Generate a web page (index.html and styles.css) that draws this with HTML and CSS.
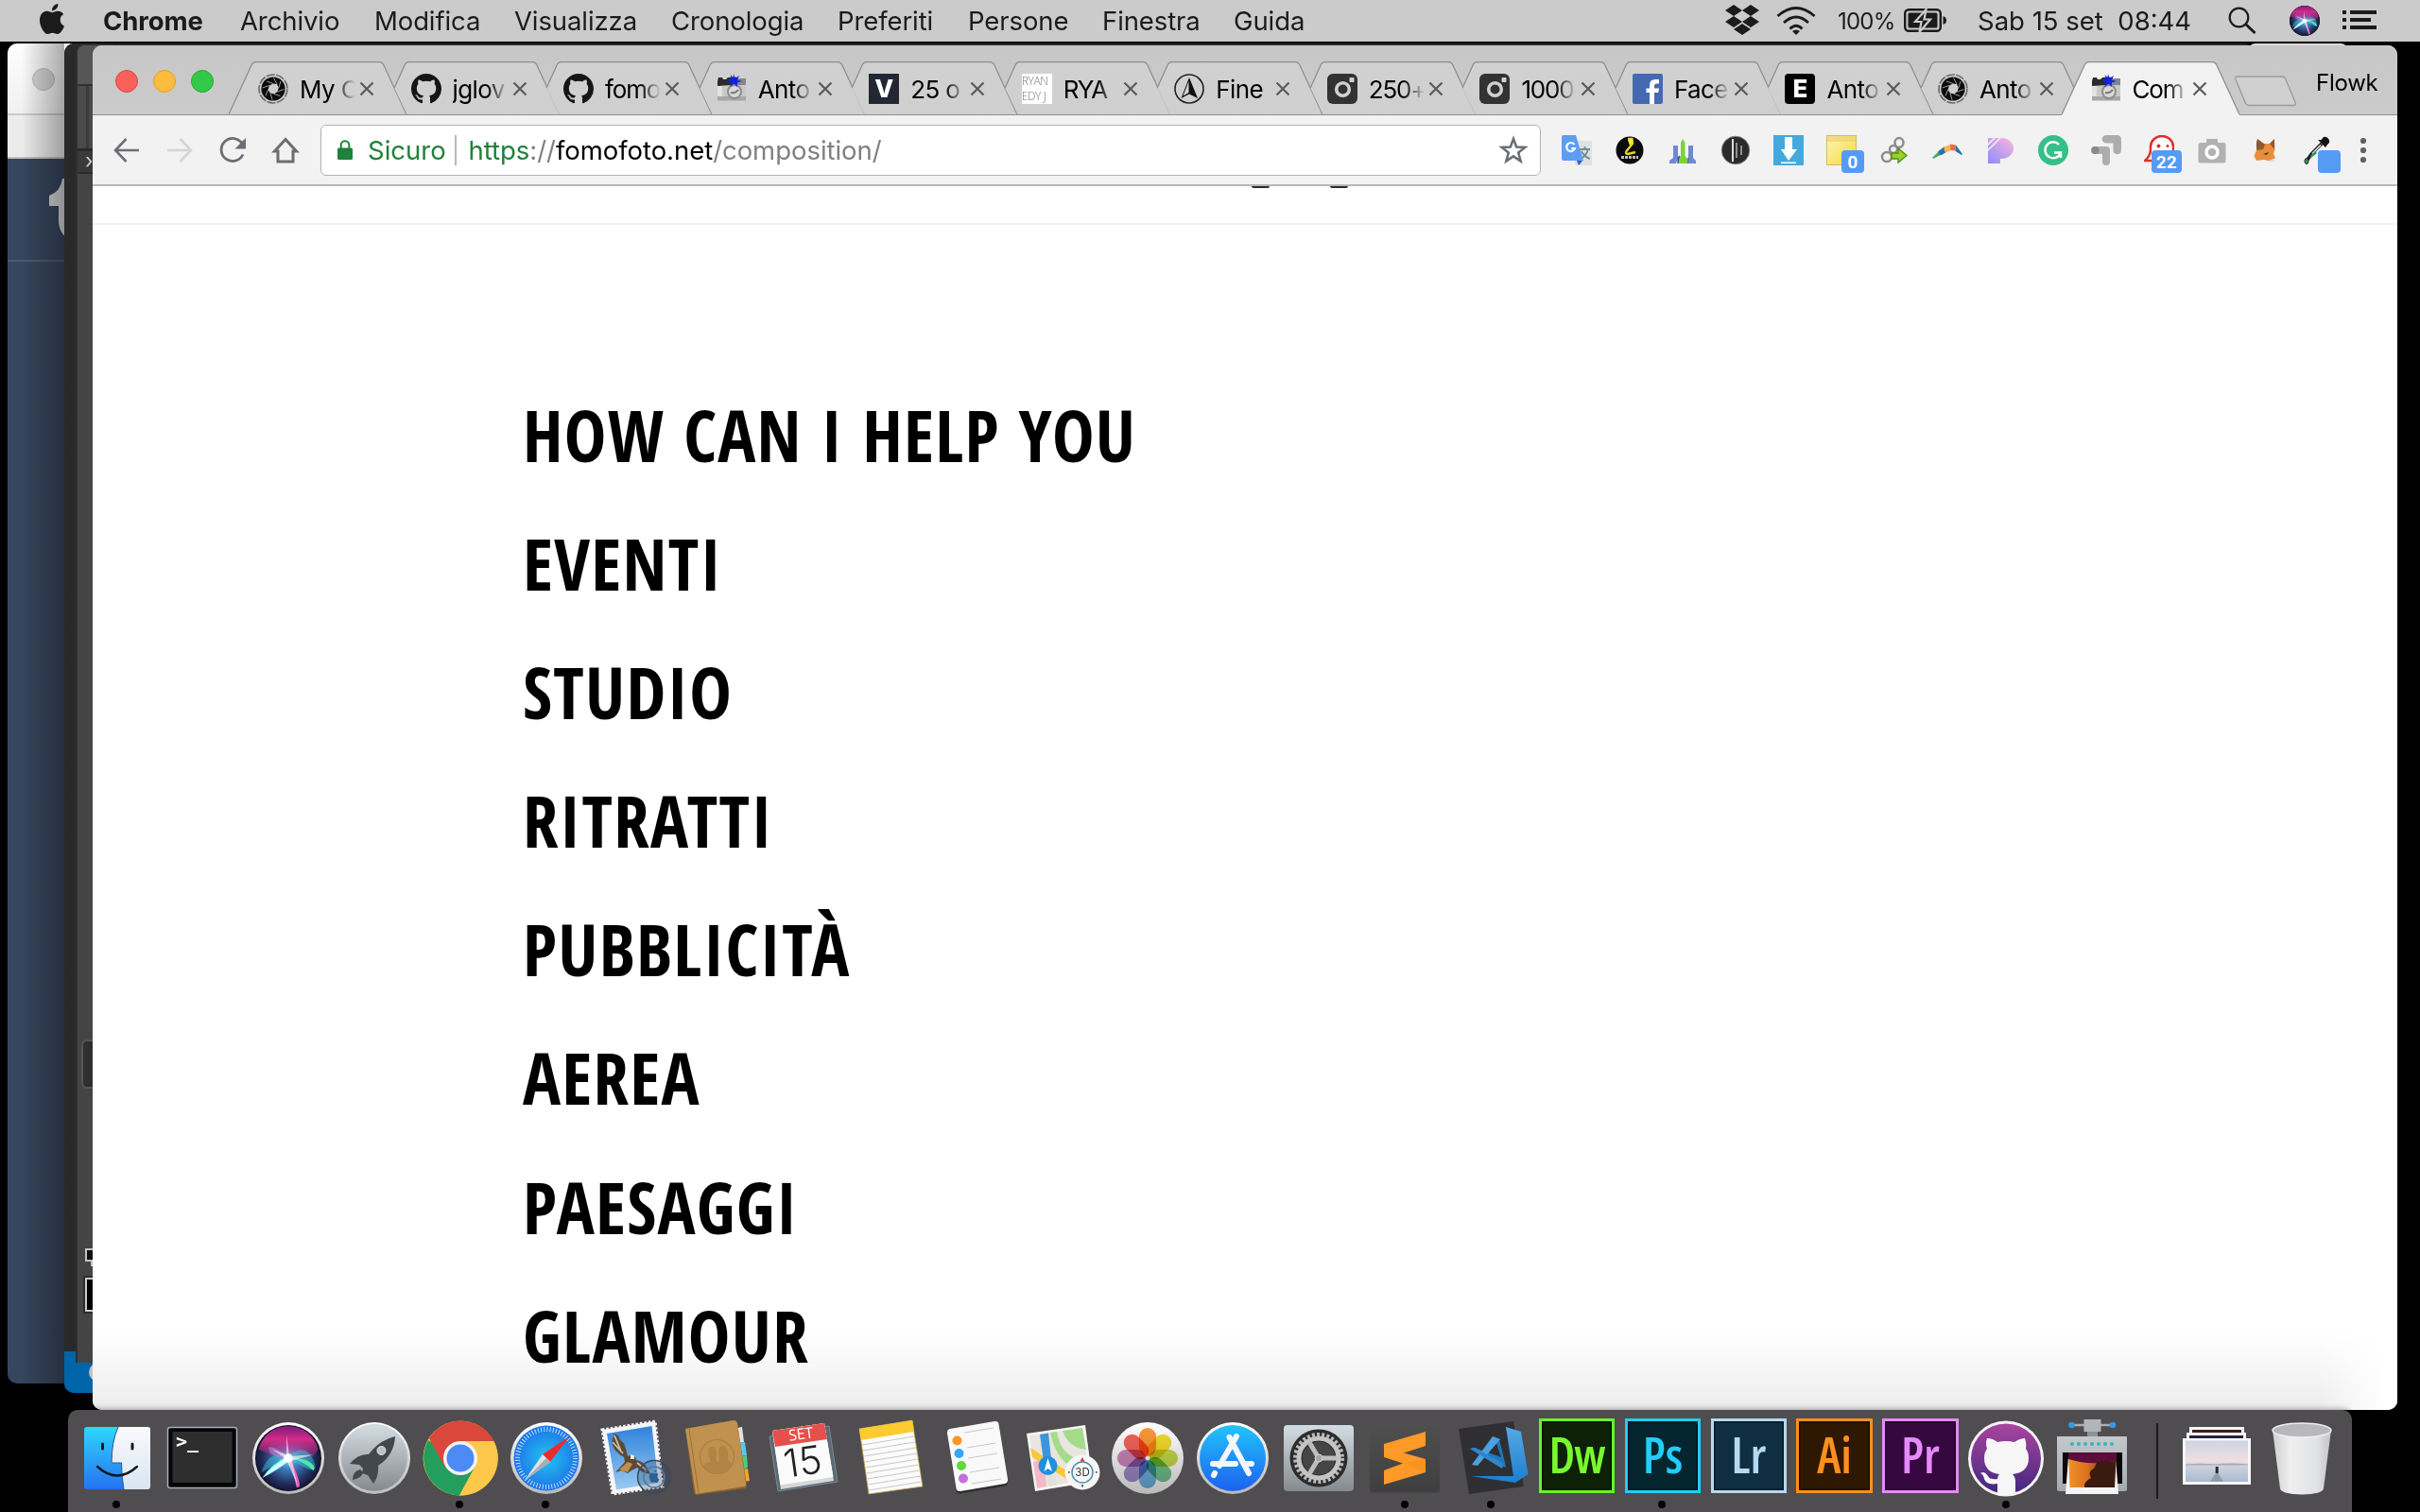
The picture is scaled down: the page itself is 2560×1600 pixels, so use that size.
FILE: index.html
```html
<!DOCTYPE html>
<html lang="it">
<head>
<meta charset="utf-8">
<title>Desktop</title>
<link rel="stylesheet" href="styles.css">
</head>
<body>
<svg class="defs" width="0" height="0" aria-hidden="true">
  <defs>
    <linearGradient id="gChrome" x1="0" y1="0" x2="0" y2="1"><stop offset="0" stop-color="#d1d1d1"/><stop offset="1" stop-color="#cfcfcf"/></linearGradient>
    <linearGradient id="gFinder" x1="0" y1="0" x2="0" y2="1"><stop offset="0" stop-color="#2fd6fb"/><stop offset="1" stop-color="#2672f3"/></linearGradient>
    <linearGradient id="gFace" x1="0" y1="0" x2="0" y2="1"><stop offset="0" stop-color="#f9f9fb"/><stop offset="1" stop-color="#d9e6f3"/></linearGradient>
    <linearGradient id="gSilver" x1="0" y1="0" x2="0" y2="1"><stop offset="0" stop-color="#d3dde3"/><stop offset="1" stop-color="#858a8d"/></linearGradient>
    <linearGradient id="gRim" x1="0" y1="0" x2="0" y2="1"><stop offset="0" stop-color="#ffffff"/><stop offset="1" stop-color="#b9b9b9"/></linearGradient>
    <radialGradient id="gSafari"><stop offset="0" stop-color="#25c3ee"/><stop offset="1" stop-color="#1c74e8"/></radialGradient>
    <linearGradient id="gStore" x1="0" y1="0" x2="0" y2="1"><stop offset="0" stop-color="#22c3fb"/><stop offset="1" stop-color="#1c62ee"/></linearGradient>
    <radialGradient id="gSiri" cx=".5" cy=".5" r=".55"><stop offset="0" stop-color="#7ff0f0"/><stop offset=".3" stop-color="#3f7fc0"/><stop offset=".7" stop-color="#23305f"/><stop offset="1" stop-color="#0c0d22"/></radialGradient>
    <linearGradient id="gSiriTop" x1="0" y1="0" x2="0" y2="1"><stop offset="0" stop-color="#7a1c7c"/><stop offset=".35" stop-color="#d42a88"/><stop offset="1" stop-color="#d42a88" stop-opacity="0"/></linearGradient>
    <linearGradient id="gSky" x1="0" y1="0" x2="0" y2="1"><stop offset="0" stop-color="#2f82dd"/><stop offset="1" stop-color="#9bcaf0"/></linearGradient>
    <linearGradient id="gGit" x1="0" y1="0" x2="0" y2="1"><stop offset="0" stop-color="#a9459f"/><stop offset="1" stop-color="#43277f"/></linearGradient>
    <linearGradient id="gTrash" x1="0" y1="0" x2="1" y2="0"><stop offset="0" stop-color="#cfcfd1"/><stop offset=".3" stop-color="#efeff0"/><stop offset=".75" stop-color="#e2e3e5"/><stop offset="1" stop-color="#c4c4c6"/></linearGradient>
    <linearGradient id="gLake" x1="0" y1="0" x2="0" y2="1"><stop offset="0" stop-color="#cfd3e3"/><stop offset=".5" stop-color="#efdfe0"/><stop offset=".6" stop-color="#cfd3de"/><stop offset="1" stop-color="#a9bccf"/></linearGradient>
    <linearGradient id="gFire" x1="0" y1="0" x2="1" y2="0"><stop offset="0" stop-color="#f0932c"/><stop offset=".4" stop-color="#d9701c"/><stop offset="1" stop-color="#3a1a14"/></linearGradient>
    <linearGradient id="gDark" x1="0" y1="0" x2="0" y2="1"><stop offset="0" stop-color="#504f4f"/><stop offset="1" stop-color="#3f3f3f"/></linearGradient>
    <linearGradient id="gVs" x1="0" y1="0" x2="0" y2="1"><stop offset="0" stop-color="#56a9e4"/><stop offset="1" stop-color="#1c7fd0"/></linearGradient>
    <linearGradient id="gPico" x1=".8" y1="0" x2="0" y2="1"><stop offset="0" stop-color="#f3b2e0"/><stop offset="1" stop-color="#8c8cfb"/></linearGradient>
    <linearGradient id="gPress" x1="0" y1="0" x2="0" y2="1"><stop offset="0" stop-color="#c3c8cc"/><stop offset="1" stop-color="#a4a9ad"/></linearGradient>
    <linearGradient id="gNote" x1="0" y1="0" x2="1" y2="1"><stop offset="0" stop-color="#fdf6b4"/><stop offset="1" stop-color="#f6d93f"/></linearGradient>
  </defs>
  <symbol id="tab-first" viewBox="0 0 188 57"><path d="M0 56 L24.5 3 Q26 .5 29 .5 H159 Q162 .5 163.5 3 L188 56Z" fill="url(#gChrome)"/><path d="M0 56 L24.5 3 Q26 .5 29 .5 H159 Q162 .5 163.5 3 L188 56" fill="none" stroke="#8e8e8e" stroke-width="1.3"/></symbol>
  <symbol id="tab-mid" viewBox="0 0 188 57"><path d="M13.2 28 L24.5 3 Q26 .5 29 .5 H159 Q162 .5 163.5 3 L188 56 H26.5Z" fill="url(#gChrome)"/><path d="M13.2 28 L24.5 3 Q26 .5 29 .5 H159 Q162 .5 163.5 3 L188 56" fill="none" stroke="#8e8e8e" stroke-width="1.3"/></symbol>
  <symbol id="tab-active" viewBox="0 0 188 57"><path d="M0 57 V56 L24.5 3 Q26 .5 29 .5 H159 Q162 .5 163.5 3 L188 56 V57Z" fill="#f2f2f2"/><path d="M0 56 L24.5 3 Q26 .5 29 .5 H159 Q162 .5 163.5 3 L188 56" fill="none" stroke="#8e8e8e" stroke-width="1.3"/></symbol>
  <symbol id="close" viewBox="0 0 16 16"><path d="M1.5 1.5 L14.5 14.5 M14.5 1.5 L1.5 14.5" stroke="#5a5a5a" stroke-width="2.2" fill="none"/></symbol>
  <symbol id="aperture" viewBox="0 0 32 32"><circle cx="16" cy="16" r="15" fill="none" stroke="#6a6a6a" stroke-width="1.6" stroke-dasharray="9 1.5"/><circle cx="16" cy="16" r="12.6" fill="#0c0c0c"/><path d="M16 10.5 L20 11 L21.8 15 L20.5 19 L17 21.5 L13 20.5 L10.5 17 L12 12.5Z" fill="#cfcfcf"/><g stroke="#a8a8a8" stroke-width=".9"><path d="M16 10.5 L9 8 M20 11 L16.500 4.500 M21.8 15 L24 8 M20.500 19 L27.500 16.500 M17 21.500 L23.500 23.500 M13 20.500 L15 27.500 M10.500 17 L8 23.500 M12 12.500 L4.500 15"/></g></symbol>
  <symbol id="octocat" viewBox="0 0 16 16"><path d="M8 0C3.58 0 0 3.58 0 8c0 3.54 2.29 6.53 5.47 7.59.4.07.55-.17.55-.38 0-.19-.01-.82-.01-1.49-2.01.37-2.53-.49-2.69-.94-.09-.23-.48-.94-.82-1.13-.28-.15-.68-.52-.01-.53.63-.01 1.08.58 1.23.82.72 1.21 1.87.87 2.33.66.07-.52.28-.87.51-1.07-1.78-.2-3.64-.89-3.64-3.95 0-.87.31-1.59.82-2.15-.08-.2-.36-1.02.08-2.12 0 0 .67-.21 2.2.82.64-.18 1.32-.27 2-.27.68 0 1.36.09 2 .27 1.53-1.04 2.2-.82 2.2-.82.44 1.1.16 1.92.08 2.12.51.56.82 1.27.82 2.15 0 3.07-1.87 3.75-3.65 3.95.29.25.54.73.54 1.48 0 1.07-.01 1.93-.01 2.2 0 .21.15.46.55.38A8.013 8.013 0 0016 8c0-4.42-3.58-8-8-8z" fill="#161414"/></symbol>
  <symbol id="camera" viewBox="0 0 32 32"><rect x="1" y="8" width="30" height="20" fill="#c9c9c9"/><path d="M1 8 L2 4 L6 4 L7 6 H10 L12 4 L20 3.5 L23 5 H31 V11 L1 13Z" fill="#2b2b2b"/><path d="M22 5 H31 V12 H22Z" fill="#84868c"/><path d="M1 13 H6 V24 H1Z" fill="#e2e2e2"/><path d="M1 24 H31 V28.5 H1Z" fill="#a7a7a7"/><circle cx="19" cy="19" r="8" fill="#8d8d8d"/><circle cx="19" cy="19" r="6" fill="#d9d9d9"/><path d="M15 20 Q20 21 23 17" stroke="#777" stroke-width="2" fill="none"/><path d="M18 0 L19.500 5 L24 2 L22 6.500 L27 8 L21.500 9.500 L22 14 L18.500 10.500 L14.500 14 L15.500 9 L11 7 L16 5.500 L14.500 1 L17.500 4Z" fill="#1423e0"/></symbol>
  <symbol id="insta" viewBox="0 0 32 32"><rect width="32" height="32" rx="6" fill="#323232"/><circle cx="16.5" cy="16.5" r="6.8" fill="none" stroke="#d0d0d0" stroke-width="3.6"/><rect x="23.5" y="4" width="5" height="5" rx="1" fill="#d0d0d0"/></symbol>
  <symbol id="siri" viewBox="0 0 80 80">
    <circle cx="40" cy="40" r="36" fill="url(#gSiri)"/>
    <path d="M7 30 A34 34 0 0 1 73 30 Q64 50 40 44 Q22 38 7 30Z" fill="url(#gSiriTop)"/>
    <path d="M10 56 Q18 30 40 38 Q58 22 68 42 Q74 56 62 52 Q50 46 42 42 Q26 46 10 56Z" fill="#35cfe0" opacity=".45"/>
    <path d="M40 40 Q26 26 18 28 Q18 40 40 40Z" fill="#b58be0" opacity=".55"/>
    <path d="M39 38 Q46 56 49 72 Q54 74 52 66 Q46 46 41 38Z" fill="#ee62b8"/>
    <path d="M40 38 Q60 46 68 54 Q72 48 60 42Z" fill="#4ee6a8"/>
    <path d="M40 38 Q22 46 11 62 Q30 52 42 42Z" fill="#a6fbfb"/>
    <path d="M38 14 L41 38 L68 36 L44 43 L50 70 L39 44 L13 60 L36 40 L22 30 L38 36Z" fill="#fff" opacity=".6"/>
    <circle cx="40" cy="40" r="5" fill="#fff"/>
  </symbol>
</svg>

<div class="window tumblr">
  <div class="tumblr-title"><span class="ghost-light"></span></div>
  <div class="tumblr-tools"></div>
  <div class="tumblr-page"><svg class="tumblr-t" width="24" height="66" viewBox="0 0 24 66"><path d="M14 0 H24 V66 Q11 60 10 46 V29 H0 V18 Q12 14 14 0Z" fill="#d4d5d8"/></svg></div>
</div>
<div class="window editor"><div class="editor-body"></div><div class="editor-status"><span class="status-dot"></span></div></div>
<div class="window photoshop">
  <div class="ps-head"></div>
  <div class="ps-options"></div>
  <div class="ps-tabs">›</div>
  <div class="ps-tools">
    <span class="ps-tool"></span>
    <svg class="ps-swatches" width="16" height="72" viewBox="0 0 16 72"><path d="M16 2 H9 V14 H16 M15 14 V20" fill="#111" stroke="#c4c4c4" stroke-width="2"/><rect x="7" y="31" width="12" height="38" fill="none" stroke="#2c2c2c" stroke-width="2"/><rect x="9" y="33" width="12" height="34" fill="#000" stroke="#c9c9c9" stroke-width="2"/></svg>
  </div>
</div>
<div class="peek"></div>

<main class="window chrome">
  <div class="tabstrip">
    <div class="lights"><i class="red"></i><i class="yellow"></i><i class="green"></i></div>
    <div class="tabs">
      <div class="tab"><svg class="shape"><use href="#tab-first"/></svg><svg class="fav"><use href="#aperture"/></svg><span class="title">My C</span><svg class="x"><use href="#close"/></svg></div>
      <div class="tab"><svg class="shape"><use href="#tab-mid"/></svg><svg class="fav"><use href="#octocat"/></svg><span class="title">jglov</span><svg class="x"><use href="#close"/></svg></div>
      <div class="tab"><svg class="shape"><use href="#tab-mid"/></svg><svg class="fav"><use href="#octocat"/></svg><span class="title tight">fomo</span><svg class="x"><use href="#close"/></svg></div>
      <div class="tab"><svg class="shape"><use href="#tab-mid"/></svg><svg class="fav"><use href="#camera"/></svg><span class="title">Anto</span><svg class="x"><use href="#close"/></svg></div>
      <div class="tab"><svg class="shape"><use href="#tab-mid"/></svg><span class="fav letter navy">V</span><span class="title">25 o</span><svg class="x"><use href="#close"/></svg></div>
      <div class="tab"><svg class="shape"><use href="#tab-mid"/></svg><span class="fav ryan">RYAN<br>EDY J</span><span class="title tight">RYA</span><svg class="x"><use href="#close"/></svg></div>
      <div class="tab"><svg class="shape"><use href="#tab-mid"/></svg><svg class="fav" viewBox="0 0 32 32"><circle cx="16" cy="16" r="15" fill="none" stroke="#222" stroke-width="1.6"/><path d="M16 4 L25 26 L16 21.5 L7.5 26Z" fill="#111"/><path d="M15.5 8 V20 L9.5 23.5Z" fill="#d4d4d4"/></svg><span class="title plain">Fine</span><svg class="x"><use href="#close"/></svg></div>
      <div class="tab"><svg class="shape"><use href="#tab-mid"/></svg><svg class="fav"><use href="#insta"/></svg><span class="title tight">250+</span><svg class="x"><use href="#close"/></svg></div>
      <div class="tab"><svg class="shape"><use href="#tab-mid"/></svg><svg class="fav"><use href="#insta"/></svg><span class="title tight">1000</span><svg class="x"><use href="#close"/></svg></div>
      <div class="tab"><svg class="shape"><use href="#tab-mid"/></svg><svg class="fav" viewBox="0 0 32 32"><rect width="32" height="32" rx="2" fill="#4568b2"/><path d="M18 32 V20 H14.5 V15.5 H18 V12 Q18 6 24 6 H28 V10.5 H25.5 Q23 10.5 23 13 V15.5 H28 L27.3 20 H23 V32Z" fill="#fff"/></svg><span class="title">Face</span><svg class="x"><use href="#close"/></svg></div>
      <div class="tab"><svg class="shape"><use href="#tab-mid"/></svg><span class="fav letter black">E</span><span class="title">Anto</span><svg class="x"><use href="#close"/></svg></div>
      <div class="tab"><svg class="shape"><use href="#tab-mid"/></svg><svg class="fav"><use href="#aperture"/></svg><span class="title">Anto</span><svg class="x"><use href="#close"/></svg></div>
      <div class="tab active"><svg class="shape"><use href="#tab-active"/></svg><svg class="fav"><use href="#camera"/></svg><span class="title tight">Com</span><svg class="x"><use href="#close"/></svg></div>
    </div>
    <svg class="newtab" width="68" height="34" viewBox="0 0 68 34"><path d="M4 1 H51 Q53.5 1 54.5 3 L65 28 Q66.5 31.5 63 31.5 H16 Q13.5 31.5 12.5 29.5 L2 4 Q1 1 4 1Z" fill="#d0d0d0" stroke="#9a9a9a" stroke-width="1.3"/></svg>
    <span class="profile">Flowk</span>
  </div>

  <div class="toolbar">
    <svg class="nav" viewBox="0 0 32 32"><path d="M29 16 H4 M15.5 4 L4 16 L15.5 28" fill="none" stroke="#6b6e73" stroke-width="2.6"/></svg>
    <svg class="nav" viewBox="0 0 32 32"><path d="M3 16 H28 M16.5 4 L28 16 L16.5 28" fill="none" stroke="#d3d4d6" stroke-width="2.6"/></svg>
    <svg class="nav" viewBox="0 0 32 32"><path d="M26.5 9.5 A12 12 0 1 0 27 20.5" fill="none" stroke="#6b6e73" stroke-width="2.8"/><path d="M30 3 V14.5 H18.5Z" fill="#6b6e73"/></svg>
    <svg class="nav" viewBox="0 0 32 32"><path d="M16 4.5 L4.5 17 H8 V28 H24 V17 H27.5Z" fill="none" stroke="#6b6e73" stroke-width="3"/></svg>
    <div class="omnibox">
      <svg class="lock" width="16" height="22" viewBox="0 0 16 22"><rect y="8.5" width="16" height="12.5" rx="1.5" fill="#20813a"/><path d="M3.7 9 V5.5 A4.3 4.3 0 0 1 12.3 5.5 V9" fill="none" stroke="#20813a" stroke-width="2"/></svg>
      <span class="secure">Sicuro</span><span class="sep"></span>
      <span class="url"><span class="scheme">https</span><span class="dim">://</span><span class="host">fomofoto.net</span><span class="dim">/composition/</span></span>
      <svg class="star" width="32" height="32" viewBox="0 0 32 32"><path d="M16 4 L19.2 12.6 L28.3 12.9 L21.2 18.6 L23.6 27.5 L16 22.4 L8.4 27.5 L10.8 18.6 L3.7 12.9 L12.8 12.6Z" fill="none" stroke="#6b6e73" stroke-width="2.6"/></svg>
    </div>
    <div class="extensions">
      <div class="ext"><svg viewBox="0 0 32 32"><rect x="14" y="6" width="18" height="26" rx="1" fill="#e1e1e1"/><path d="M19 15 H30 M24.5 12 V15 M28 15 Q26 22 20 25 M21 17 Q24 23 30 25" stroke="#6f8b92" stroke-width="1.8" fill="none"/><path d="M16 27 L23 26 L18 32Z" fill="#3a5bc4"/><path d="M2 0 H15 L23 27 H2 Q0 27 0 25 V2 Q0 0 2 0Z" fill="#5c9ef3"/><path d="M13.5 10 A4.5 4.5 0 1 0 14 14 H10" fill="none" stroke="#fff" stroke-width="2.2"/></svg></div>
      <div class="ext"><svg viewBox="0 0 32 32"><circle cx="16" cy="16" r="14.500" fill="#0a0a0a"/><path d="M14 4 H18.500 L19 9 L12.500 17 Q11 20 14 20 L22 18" fill="none" stroke="#e0d620" stroke-width="2.4"/><path d="M14 5 L18 4 L19 8 L16 11Z" fill="#f4ec3a"/><path d="M7 23.500 H25" stroke="#bbb" stroke-width="3" stroke-dasharray="3 1"/></svg></div>
      <div class="ext"><svg viewBox="0 0 32 32"><path d="M6 11 H11 V24 L9 30 H2 V27 L6 24Z M22 11 H27 V24 L30 27 V30 H23 L22 24Z" fill="#6f8ad2"/><path d="M16.200 4 L18.500 8 V22 L22 26 V30 H11 V26 L14 22 V8Z" fill="#7fd13a"/><path d="M11 30 V24 L13 22 M22 30 V24" stroke="#4b62b8" stroke-width="1.5"/></svg></div>
      <div class="ext"><svg viewBox="0 0 32 32"><circle cx="16" cy="16" r="14.8" fill="#2b2b2b" stroke="#888" stroke-width="1"/><path d="M13 4 V28" stroke="#ddd" stroke-width="2"/><path d="M17 8 V24 M22 11 V21" stroke="#aaa" stroke-width="1.6"/></svg></div>
      <div class="ext"><svg viewBox="0 0 32 32"><rect width="32" height="32" fill="#44aade"/><path d="M12 2 H20 V15 H25 L16 27 L8 15 H12Z M8 28.5 H24 V30 H8Z" fill="#fff"/></svg></div>
      <div class="ext"><svg viewBox="0 0 32 32"><rect x=".5" y=".5" width="31" height="31" fill="url(#gNote)" stroke="#d8b95c"/><rect x="1" y="1" width="30" height="6" fill="#e9cf6a" opacity=".6"/></svg><b class="badge">0</b></div>
      <div class="ext"><svg viewBox="0 0 32 32"><g fill="none" stroke="#8d8d8d" stroke-width="2.5"><ellipse cx="21" cy="8" rx="4.500" ry="5"/><circle cx="15" cy="15" r="4"/><circle cx="8" cy="23" r="5"/></g><path d="M13 19 H20 V14 L29 21.5 L20 29 V25 H13Z" fill="#9ad227" stroke="#4f8f12" stroke-width="1.3"/></svg></div>
      <div class="ext"><svg viewBox="0 0 32 32"><path d="M0 24 L8 16 L9.500 20.500 L1 25Z" fill="#4aa36a"/><path d="M6 17.500 L13 12 L14 18.500 L9 21.500Z" fill="#2277a8"/><path d="M12 13 L19.500 9.500 L20 16 L14 18.500Z" fill="#f4b74f"/><path d="M19 9.5 L25 10.5 L24.500 16.500 L19.500 16Z" fill="#ee6a4d"/><path d="M25 10.5 L32 20 L31 21 L24.500 17Z" fill="#1c7ba8"/></svg></div>
      <div class="ext"><svg viewBox="0 0 32 32"><path d="M3 3 H17 A13 11 0 0 1 17 25 H16 V30 H3Z" fill="url(#gPico)"/><path d="M2 11 L12 1 M2 17 L18 1" stroke="#f2f2f2" stroke-width="1.5"/></svg></div>
      <div class="ext"><svg viewBox="0 0 32 32"><circle cx="16" cy="16" r="16" fill="#34c087"/><path d="M22 9.8 A8.5 8.5 0 1 0 24 18.5 H17 M24 18 V24" fill="none" stroke="#fff" stroke-width="2.4"/></svg></div>
      <div class="ext"><svg viewBox="0 0 32 32"><path d="M16 4.300 H27.700 V16" fill="none" stroke="#adadad" stroke-width="8.500" stroke-linejoin="round" stroke-linecap="round"/><path d="M4 16 H16 V28" fill="none" stroke="#adadad" stroke-width="8" stroke-linejoin="round" stroke-linecap="round"/><circle cx="4.500" cy="16" r="4" fill="#8a8a8a"/></svg></div>
      <div class="ext"><svg viewBox="0 0 32 32"><path d="M1 27 Q7 22 7 15 V12 A12 11 0 0 1 31 12 V18 L10 27Z" fill="#fff" stroke="#e1302d" stroke-width="2.5"/><circle cx="15.5" cy="11.5" r="2" fill="#e1302d"/><circle cx="25" cy="11.5" r="1.5" fill="#e1302d"/></svg><b class="badge wide">22</b></div>
      <div class="ext"><svg viewBox="0 0 32 32"><path d="M4 8 H10 V4 H22 V8 H28 Q30.5 8 30.5 10.5 V27 Q30.5 29.5 28 29.5 H4 Q1.5 29.5 1.5 27 V10.5 Q1.5 8 4 8Z" fill="#b1b1b1"/><circle cx="16" cy="18" r="6" fill="none" stroke="#fff" stroke-width="3.5"/></svg></div>
      <div class="ext"><svg viewBox="0 0 32 32"><path d="M8 4 L15 9 H21 L26 4 L26.500 15 L25 20 L27 24 L24 28 L15 26 L7 27 L4.500 22 L7 16Z" fill="#ea8d3a"/><path d="M8 4 L16 10 L14 15 L7.500 16 Q6 9 8 4Z M26 4 L21 9 L26 15Z" fill="#8c5a33"/><path d="M14 20 L20 18 L18 21Z" fill="#3b3b3b"/><path d="M20 27 L27 24 L25 28.5Z" fill="#ddd"/></svg></div>
      <div class="ext"><svg viewBox="0 0 32 32"><path d="M20 9 L9 20 L5 26" stroke="#222" stroke-width="3.500" fill="none"/><path d="M19 10.5 L10 19.5" stroke="#e9efe9" stroke-width="1.5"/><path d="M13 17 L8 22 L9 24 L15 19Z" fill="#2f9a57"/><path d="M16 5 L24 13 L26 10 L28 8 A5 5 0 0 0 22 2 L19.5 5Z" fill="#111"/><ellipse cx="4" cy="27.5" rx="2" ry="3" fill="#2f9a57" stroke="#222"/></svg><b class="badge"></b></div>
      <svg class="dots" width="8" height="28" viewBox="0 0 8 28"><g fill="#5f6368"><circle cx="4" cy="4" r="3.1"/><circle cx="4" cy="14" r="3.1"/><circle cx="4" cy="24" r="3.1"/></g></svg>
    </div>
  </div>

  <div class="page">
    <header class="page-head"><i></i><i></i></header>
    <section class="services">
      <h2>HOW CAN I HELP YOU</h2>
      <h2>EVENTI</h2>
      <h2>STUDIO</h2>
      <h2>RITRATTI</h2>
      <h2>PUBBLICITÀ</h2>
      <h2>AEREA</h2>
      <h2>PAESAGGI</h2>
      <h2>GLAMOUR</h2>
    </section>
    <div class="page-shade"></div>
  </div>
</main>

<nav class="menubar">
  <svg class="apple" width="32" height="32" viewBox="0 0 24 24"><path d="M12.152 6.896c-.948 0-2.415-1.078-3.96-1.04-2.04.027-3.91 1.183-4.961 3.014-2.117 3.675-.546 9.103 1.519 12.09 1.013 1.454 2.208 3.09 3.792 3.039 1.52-.065 2.09-.987 3.935-.987 1.831 0 2.35.987 3.96.948 1.637-.026 2.676-1.48 3.676-2.948 1.156-1.688 1.636-3.325 1.662-3.415-.039-.013-3.182-1.221-3.22-4.857-.026-3.04 2.48-4.494 2.597-4.559-1.429-2.09-3.623-2.324-4.39-2.376-2-.156-3.675 1.09-4.61 1.09zM15.53 3.83c.843-1.012 1.4-2.427 1.245-3.83-1.207.052-2.662.805-3.532 1.818-.78.896-1.454 2.338-1.273 3.714 1.338.104 2.715-.688 3.559-1.701" fill="#1b1b1b"/></svg>
  <div class="menus"><b>Chrome</b><span>Archivio</span><span>Modifica</span><span>Visualizza</span><span>Cronologia</span><span>Preferiti</span><span>Persone</span><span>Finestra</span><span>Guida</span></div>
  <div class="status">
    <svg class="dropbox" width="38" height="34" viewBox="0 0 38 34"><path d="M10 0 L19 6 L10 12 L1 6Z M28 0 L37 6 L28 12 L19 6Z M10 12 L19 18 L10 24 L1 18Z M28 12 L37 18 L28 24 L19 18Z M19 20 L28 26 L19 32 L10 26Z" fill="#1b1b1b"/></svg>
    <svg class="wifi" width="42" height="30" viewBox="0 0 42 30"><path d="M1.5 10 Q21 -7 40.5 10 M8 17 Q21 5 34 17 M14.5 23.5 Q21 17 27.5 23.5" fill="none" stroke="#1b1b1b" stroke-width="2.8"/><path d="M21 30 L17 26 Q21 23 25 26Z" fill="#1b1b1b"/></svg>
    <span class="percent">100%</span>
    <svg class="battery" width="46" height="26" viewBox="0 0 46 26"><rect x="1.2" y="1.2" width="37.6" height="22.6" rx="4" fill="none" stroke="#1b1b1b" stroke-width="2.4"/><path d="M41.5 8 Q45 9 45 12.5 Q45 16 41.5 17Z" fill="#1b1b1b"/><rect x="4.5" y="4.5" width="31" height="16" rx="1.5" fill="#1b1b1b"/><path d="M23.5 1 L12 14 H18.5 L16.5 25 L28 11.5 H21.5Z" fill="#1b1b1b" stroke="#cbcbcb" stroke-width="2.2"/></svg>
    <span class="clock">Sab 15 set&nbsp; 08:44</span>
    <svg class="search" width="30" height="30" viewBox="0 0 30 30"><circle cx="11.5" cy="11.5" r="9.8" fill="none" stroke="#1b1b1b" stroke-width="2.2"/><path d="M18.5 18.5 L28.5 28" stroke="#1b1b1b" stroke-width="3"/></svg>
    <svg class="siri" width="32" height="32" viewBox="4 4 72 72"><use href="#siri" width="80" height="80"/></svg>
    <svg class="list" width="36" height="22" viewBox="0 0 36 22"><path d="M0 2 H4 M8 2 H36 M0 10 H4 M8 10 H30 M0 18 H4 M8 18 H36" stroke="#1b1b1b" stroke-width="4"/></svg>
  </div>
</nav>

<footer class="dock">
  <div class="app running"><svg viewBox="0 0 90 108"><rect x="10" y="18" width="70" height="66" rx="3" fill="url(#gFinder)"/><path d="M46 18 H77 Q80 18 80 21 V81 Q80 84 77 84 H52 Q49.5 70 49.5 56 H39 Q39 34 46 18Z" fill="url(#gFace)"/><path d="M46 18 Q39 34 39 56 H49.5 Q49.5 70 52 84" fill="none" stroke="#245a8f" stroke-width="1"/><path d="M24 60 Q45 79 66 60" fill="none" stroke="#15181c" stroke-width="2.4" stroke-linecap="round"/><path d="M29.5 36 V41 M61 36 V41" stroke="#15181c" stroke-width="3" stroke-linecap="round"/></svg></div>
  <div class="app"><svg viewBox="0 0 90 108"><rect x="8.5" y="18.5" width="73" height="64" rx="2.5" fill="#050505" stroke="#9fb0ba" stroke-width="1.5"/><rect x="13.5" y="23" width="63" height="54" fill="#2e2e2e"/><text x="17" y="40" class="prompt">&gt;_</text></svg></div>
  <div class="app"><svg viewBox="0 0 90 108"><circle cx="45" cy="51" r="38" fill="url(#gRim)"/><circle cx="45" cy="51" r="35" fill="#0c0d22"/><use href="#siri" x="7" y="13" width="76" height="76"/></svg></div>
  <div class="app"><svg viewBox="0 0 90 108"><circle cx="45" cy="51" r="38" fill="url(#gRim)"/><circle cx="45" cy="51" r="35.5" fill="url(#gSilver)" stroke="#c8d4da" stroke-width="1"/><path d="M67 28 Q50 32 39 47 Q28 46 19 57 L29 58 L33 62 L32 67 L38 69 L44 78 Q50 70 49 59 Q66 48 67 28Z" fill="#43484c"/><circle cx="52.5" cy="43" r="4.5" fill="#b9c2c7" stroke="#dbe3e6" stroke-width="1"/><path d="M30 63 Q22 65 22 74 Q32 72 33 66Z" fill="#43484c"/></svg></div>
  <div class="app running"><svg viewBox="0 0 90 108"><circle cx="45" cy="51" r="39.5" fill="#fdc849"/><path d="M45 51 L11 32 A39.5 39.5 0 0 0 44 90.5 L62 58Z" fill="#249e5c"/><path d="M12 30 A39.5 39.5 0 0 1 80.5 33 H45 L28 60Z" fill="#d9483b"/><path d="M45 33 H80.5 A39.5 39.5 0 0 1 44 90.5 L60.5 60Z" fill="#fdc849"/><circle cx="45" cy="51" r="18" fill="#f4f4f4"/><circle cx="45" cy="51" r="14.5" fill="#4c8bf5"/></svg></div>
  <div class="app running"><svg viewBox="0 0 90 108"><circle cx="45" cy="51" r="38" fill="url(#gRim)"/><circle cx="45" cy="51" r="34.5" fill="url(#gSafari)"/><circle cx="45" cy="51" r="30.5" fill="none" stroke="#cfeafc" stroke-width="5" stroke-dasharray=".9 2.3"/><path d="M69.5 28 L49 55 L41 47Z" fill="#ee2a2a"/><path d="M21.5 75 L41 47 L49 55Z" fill="#dfe3e6"/><path d="M45 51 L49 55 L21.5 75Z" fill="#a9adb1"/></svg></div>
  <div class="app"><svg viewBox="0 0 90 108"><path d="M13 21 L69 12 L77 81 L24 89Z" fill="#f5f6f7" stroke="#f5f6f7" stroke-width="3" stroke-dasharray="2.5 2"/><path d="M18 25 L65.5 17 L72.5 77 L28 84.5Z" fill="url(#gSky)"/><path d="M26 25 L30 27 L32 32 L36 35 L38 41 L40 49 L45 47 L48 50 L49 53 Q57 54 61 62 L64 68 L56 66 L50 61 L44 64 L40 67 L34 64 L27 66 L37 55 L36 50 Q25 44 23 34Z" fill="#5d4a36"/><path d="M26 27 L33 44 M24 34 L35 46 M50 56 L59 63" stroke="#cdbda4" stroke-width="1.800"/><path d="M31 63 L40 55 L45 57 L40 66Z" fill="#c08f50"/><path d="M43 47 L47 48 L47 52 L43 52Z" fill="#efe9dd"/><circle cx="68" cy="71" r="17.5" fill="#27415c" fill-opacity=".28" stroke="#3c4b5c" stroke-width="1.5"/><circle cx="68" cy="71" r="11" fill="none" stroke="#4f79a3" stroke-width="1.5"/><svg x="61" y="63" width="14" height="15" viewBox="0 0 24 24"><path d="M12 7 Q4 3 3 12 Q4 23 9 23 L12 22 Q18 26 21 17 Q14 12 20 8 Q16 5 12 7 M12 5 Q12 1 16 0 Q16 4 12 5Z" fill="#2e5f95"/></svg></svg></div>
  <div class="app"><svg viewBox="0 0 90 108"><path d="M66 19 L71 18 L73 34 L68 35Z" fill="#e3e3e3"/><path d="M68 35 L74 34 L76 48 L70 49Z" fill="#5cc6e8"/><path d="M70 49 L76 48 L77 61 L72 63Z" fill="#45d07c"/><path d="M72 63 L77 62 L79 75 L73 76Z" fill="#f4a824"/><path d="M11 20 L62 11 Q65 11 66 14 L76 80 L75 83 L23 90 Q21 90 20 87Z" fill="#8c6331"/><path d="M11 20 L62 11 Q65 11 66 14 L75 78 Q75 81 73 81 L22 89Z" fill="#c1914f"/><path d="M15 20 L25 88" stroke="#9c7038" stroke-width="1"/><circle cx="44.5" cy="49.5" r="18" fill="none" stroke="#a88045" stroke-width="1.2"/><path d="M30 60 Q31 56 37 55 Q38 53 36 50 Q33 38 40 39 Q46 40 43.500 50 Q43 53 45 55 Q47 53 47 50 Q44 38 51 38 Q57 38 56 51 Q56 54 60 57 Q54 67 44.500 67 Q35 66 30 60Z" fill="#b08445"/></svg></div>
  <div class="app"><svg viewBox="0 0 90 108"><path d="M9 28 L72 17 L81 76 L18 86Z" fill="#5a6a74" stroke="#7b8b95"/><path d="M12 22 L67 14 L77 75 L21 84Z" fill="#d7d7d7"/><path d="M12 22 L67 14 L76.5 71 L20.5 79.5Z" fill="#fbfbfb"/><path d="M12 22 L67 14 L70 31 L15 39Z" fill="#e6504c"/><text x="43" y="31" class="cal-month" transform="rotate(-8 43 31)">SET</text><text x="46" y="69" class="cal-day" transform="rotate(-8 46 69)">15</text></svg></div>
  <div class="app"><svg viewBox="0 0 90 108"><path d="M13 20 L69 11 L80 81 L23 89Z" fill="#fbfbfb" stroke="#b99a3a" stroke-width=".8"/><path d="M13 20 L69 11 L71 23 L15 32Z" fill="#fccb2f"/><g stroke="#c8c8c8" stroke-width="1"><path d="M16 37 L71 28 M17 43 L72 34 M18 49 L73 40 M18.5 55 L74 46 M19.5 61 L75 52 M20.5 67 L76 58 M21.5 73 L77 64 M22 79 L77.5 70 M23 85 L78.5 76"/></g></svg></div>
  <div class="app"><svg viewBox="0 0 90 108"><path d="M18 21 L65 13 Q69 12.5 69.5 16 L79 74 Q79.5 78 76 79 L29 87 Q25 87.5 24.5 84 L15 26 Q14.5 22 18 21Z" fill="#2e2e2e" transform="translate(0 1.5)"/><path d="M18 20 L65 12 Q69 11.5 69.5 15 L79 73 Q79.5 77 76 78 L29 86 Q25 86.5 24.5 83 L15 25 Q14.5 21 18 20Z" fill="#f9f9f9"/><g stroke="#c9c9c9"><path d="M33 24 L64 19 M36 40 L66 35 M37 51 L68 46 M39 66 L70 61 M41 78 L72 73"/></g><circle cx="25.5" cy="32.5" r="5" fill="#ff9427"/><circle cx="27.5" cy="46" r="5" fill="#2fa9f5"/><circle cx="30" cy="59" r="5" fill="#63d63f"/><circle cx="32" cy="72.5" r="5" fill="#c46fdf"/></svg></div>
  <div class="app"><svg viewBox="0 0 90 108"><path d="M8 25 L70 16 L78 76 L17 86Z" fill="#f6f6f4"/><path d="M11 27 L67 19 L75 73 L19 83Z" fill="#e8e6df"/><path d="M46 22 L67 19 L71 42 Q52 40 46 22Z" fill="#a5dc8c"/><path d="M33 24 L40 23 Q44 48 64 52 L71 60 L72 68 Q40 60 33 24Z" fill="#a5dc8c"/><path d="M15 55 L19 83 L29 81 L26 52Z" fill="#f4b9c8"/><path d="M12 40 L56 68 L52 74 L14 50Z" fill="#fbc739"/><path d="M22 26 L31 24.5 L40 80 L31 81Z" fill="#e3e1d9"/><path d="M22 26 L31 24.5 L34 52 L26 54Z" fill="#3d95dc"/><circle cx="30.5" cy="59" r="10" fill="#1f8fe0"/><path d="M30.5 51 L35 65 L30.5 62 L26.5 65Z" fill="#fff"/><circle cx="67" cy="66" r="18.5" fill="#f7f7f8"/><circle cx="67" cy="66" r="11" fill="none" stroke="#4f8fb0" stroke-width="1.5"/><path d="M67 50 L69.5 54.5 H64.5Z" fill="#e33"/><path d="M67 79 V81.5 M52 66 H53.5 M81 66 H82.5" stroke="#333" stroke-width="1.5"/><text x="67" y="70" class="map-3d">3D</text></svg></div>
  <div class="app"><svg viewBox="0 0 90 108"><circle cx="45" cy="51" r="38" fill="url(#gRim)"/><g class="petals" transform="translate(45 51)"><rect x="-9" y="-32" width="18" height="30" rx="9" fill="#fd9a36"/><rect x="-9" y="-32" width="18" height="30" rx="9" fill="#f5dd2c" transform="rotate(45)"/><rect x="-9" y="-32" width="18" height="30" rx="9" fill="#c8dc4a" transform="rotate(90)"/><rect x="-9" y="-32" width="18" height="30" rx="9" fill="#74c691" transform="rotate(135)"/><rect x="-9" y="-32" width="18" height="30" rx="9" fill="#70b4e4" transform="rotate(180)"/><rect x="-9" y="-32" width="18" height="30" rx="9" fill="#a08dcb" transform="rotate(225)"/><rect x="-9" y="-32" width="18" height="30" rx="9" fill="#d086bc" transform="rotate(270)"/><rect x="-9" y="-32" width="18" height="30" rx="9" fill="#f3655c" transform="rotate(315)"/></g></svg></div>
  <div class="app"><svg viewBox="0 0 90 108"><circle cx="45" cy="51" r="38" fill="url(#gRim)"/><circle cx="45" cy="51" r="35" fill="url(#gStore)"/><g stroke="#f4f6fa" stroke-width="6" stroke-linecap="round" fill="none"><path d="M49 28 L31 59 M24 57 H48 M41.5 29 L62 67 M58 57 H65"/><path d="M26 67 L25 69"/></g></svg></div>
  <div class="app"><svg viewBox="0 0 90 108"><rect x="8" y="16" width="74" height="70" rx="4" fill="url(#gSilver)"/><circle cx="45" cy="51" r="30.5" fill="#2d2d2d"/><circle cx="45" cy="51" r="25" fill="none" stroke="#b9b9b9" stroke-width="4" stroke-dasharray="3 2.23"/><circle cx="45" cy="51" r="21" fill="none" stroke="#c4c4c4" stroke-width="5"/><circle cx="45" cy="51" r="17.5" fill="#454545"/><path d="M45 51 L64 51 M45 51 L35.5 35 M45 51 L35.5 67" stroke="#bdbdbd" stroke-width="5"/><circle cx="45" cy="51" r="4" fill="#a5a5a5" stroke="#d8d8d8"/></svg></div>
  <div class="app running"><svg viewBox="0 0 90 108"><rect x="8" y="14.5" width="74" height="73" rx="4" fill="url(#gDark)"/><path d="M67 23 V38 L44 45.500 L67 52 V66 L23 79 V64 L43 56.500 L23 50 V36Z" fill="#ff9a28"/><path d="M43 56 L66 66 L67 52Z" fill="#e98412" opacity=".3"/></svg></div>
  <div class="app running"><svg viewBox="0 0 90 108"><path d="M11 20 L69 12 L80 81 L22 89Z" fill="#2f2f33"/><path d="M61 18 L77 23 L84.5 68 L71 77 L24 70 L69 70Z" fill="url(#gVs)"/><path d="M49 29 L54 31 L61 60 L56 61 L23 41 L28 40 L56 50Z" fill="#1f77bd"/><path d="M47 28 L55 31 L31 59 L25 58Z" fill="#4ba0e0"/><path d="M23 41 L28 40 L57 56 L57 62Z" fill="#2f86cc"/></svg></div>
  <div class="app"><div class="adobe dw">Dw</div></div>
  <div class="app running"><div class="adobe ps">Ps</div></div>
  <div class="app"><div class="adobe lr">Lr</div></div>
  <div class="app"><div class="adobe ai">Ai</div></div>
  <div class="app"><div class="adobe pr">Pr</div></div>
  <div class="app running"><svg viewBox="0 0 90 108"><circle cx="45" cy="51.5" r="40" fill="#f4f4f4"/><circle cx="45" cy="51.5" r="37" fill="url(#gGit)"/><path d="M25 30 Q31 30 36 34 Q45 32 54 34 Q60 30 65 30 Q67 36 66 41 Q69 45 69 51 Q69 66 52 68 Q55 71 55 76 V89 Q45 91 36 89 V78 Q24 80 22 73 Q21 68 18 67 Q22 64 26 70 Q28 74 36 73 Q36 70 38 68 Q22 66 22 51 Q22 45 25 41 Q23 36 25 30Z" fill="#f6f6f6"/></svg></div>
  <div class="app"><svg viewBox="0 0 90 108"><path d="M23 16 H68" stroke="#a6adb2" stroke-width="2.500"/><circle cx="23.500" cy="16" r="3.300" fill="#2f9bea"/><circle cx="67" cy="16" r="3.300" fill="#2f9bea"/><rect x="36.500" y="10" width="18" height="13" fill="#b0b5b9"/><rect x="40" y="23" width="11" height="5" fill="#8e9397"/><path d="M8 28 H81 Q82 28 82 29 V84 Q82 86 80 86 H10 Q8 86 8 84Z" fill="url(#gPress)"/><g fill="#35b3c4"><circle cx="24" cy="36" r="2"/><circle cx="31" cy="36" r="2"/><circle cx="38" cy="36" r="2"/><circle cx="45" cy="36" r="2"/><circle cx="52" cy="36" r="2"/><circle cx="59" cy="36" r="2"/><circle cx="66" cy="36" r="2"/></g><rect x="14" y="45" width="63" height="33" fill="#0b0507"/><path d="M20 50 H70 L73 89 H17Z" fill="#f5f5f5"/><path d="M20 45 H71 L69 82 H21.5Z" fill="url(#gFire)"/><path d="M20 45 H71 V53 Q46 60 20 52Z" fill="#5b0d3c"/><path d="M50 56 Q58 52 69 56 V82 H37 Q36 76 44 72 Q40 65 47 62Z" fill="#3b1b10"/></svg></div>
  <div class="divider"></div>
  <div class="app"><svg viewBox="0 0 90 108"><rect x="18.500" y="19.500" width="55" height="20" fill="#4a1a16" stroke="#f4f4f4" stroke-width="3"/><rect x="15.500" y="25.500" width="60" height="20" fill="#26213f" stroke="#f4f4f4" stroke-width="3"/><rect x="10" y="30" width="72" height="49" fill="#f6f6f6"/><rect x="13" y="32.500" width="66" height="43.500" fill="url(#gLake)"/><path d="M13 57.500 Q28 56 44 57.500 Q60 55.500 79 57.500 V58.500 H13Z" fill="#a9a9b8"/><path d="M45 67 H47.500 L53 76 H39Z" fill="#8f9db0"/><path d="M46.200 60 V67" stroke="#222938" stroke-width="3"/></svg></div>
  <div class="app"><svg viewBox="0 0 90 108"><path d="M14 21 L22 83 Q23 89 45 89.5 Q67 89 68 83 L76 21Z" fill="url(#gTrash)"/><ellipse cx="45" cy="21.5" rx="31" ry="7.5" fill="#b9b9bb" stroke="#efefef" stroke-width="1.5"/></svg></div>
</footer>
</body>
</html>
```
FILE: styles.css
```css
* { box-sizing: border-box; }
body { margin: 0; width: 2560px; height: 1600px; background: #000; overflow: hidden; position: relative; font-family: Inter, "Liberation Sans", sans-serif; }
.defs { position: absolute; }
.window { position: absolute; overflow: hidden; }

/* menu bar */
.menubar { position: absolute; left: 0; top: 0; width: 2560px; height: 44px; background: #cbcbcb; color: #1b1b1b; display: flex; align-items: center; font-size: 27.5px; }
.apple { margin: -4px 0 0 39px; flex: none; }
.menus { display: grid; grid-template-columns: 145px 142px 148px 166px 176px 138px 142px 139px 90px; margin-left: 38px; white-space: nowrap; letter-spacing: -.1px; }
.menus b { font-weight: 700; }
.status { margin-left: auto; display: flex; align-items: center; padding-right: 46px; white-space: nowrap; }
.wifi { margin-left: 17px; }
.percent { font-size: 24px; width: 70px; margin-left: 23px; letter-spacing: -.8px; }
.clock { margin-left: 32px; width: 233px; letter-spacing: 0; }
.search { margin-left: 32px; }
.siri { margin-left: 35px; border-radius: 50%; background: #0c0d22; }
.list { margin-left: 24px; }

/* windows behind */
.tumblr { left: 8px; top: 46px; width: 90px; height: 1418px; border-radius: 10px; background: #36465d; }
.tumblr::after { content: ""; position: absolute; inset: 0 30px 0 0; background: linear-gradient(90deg, rgba(0,0,0,0) 25%, rgba(0,0,0,.32)); }
.tumblr-title { height: 76px; background: linear-gradient(#fdfdfd, #f1f1f1); border-bottom: 2px solid #c9c9c9; padding: 26px 0 0 26px; }
.ghost-light { display: block; width: 24px; height: 24px; border-radius: 50%; background: #d4d4d4; border: 1px solid #bdbdbd; }
.tumblr-tools { height: 46px; background: #ececec; border-bottom: 2px solid #c2c2c2; }
.tumblr-page { height: 109px; border-bottom: 2px solid #4b5a70; }
.tumblr-t { display: block; padding-top: 0; margin-left: 44px; transform: translateY(21px); }
.editor { left: 68px; top: 46px; width: 60px; height: 1428px; border-radius: 10px; background: #292929; }
.editor-body { height: 1384px; background: #292929; }
.editor-status { height: 44px; background: #0065a8; padding: 12px 0 0 26px; }
.status-dot { display: block; width: 20px; height: 20px; border-radius: 50%; background: #c3c3c3; }
.photoshop { left: 80px; top: 46px; width: 40px; height: 1396px; border-radius: 10px 0 0 0; background: #444; border-left: 2px solid #303030; border-top: 2px solid #303030; }
.ps-head { height: 43px; background: #565656; border-bottom: 2px solid #303030; }
.ps-options { height: 69px; background: #4a4a4a linear-gradient(90deg, transparent 9px, #3a3a3a 9px, #3a3a3a 12px, transparent 12px); border-bottom: 3px solid #2b2b2b; }
.ps-tabs { height: 24px; color: #cfcfcf; background: #3a3a3a; border-bottom: 2px solid #2b2b2b; font-size: 22px; line-height: 20px; padding-left: 8px; }
.ps-tools { display: flex; flex-direction: column; padding-top: 916px; }
.ps-tool { height: 52px; width: 40px; margin-left: 4px; border: 2px solid #555; border-radius: 6px; background: #2f2f2f; }
.ps-swatches { margin-top: 168px; }
.peek { position: absolute; left: 2378px; top: 46px; width: 106px; height: 10px; border-radius: 8px 8px 0 0; background: #dcdcdc; }
body::before { content: ""; position: absolute; left: 80px; top: 46px; width: 2300px; height: 10px; border-radius: 8px; background: #2c2a2c; }

/* browser window */
.chrome { left: 98px; top: 48px; width: 2438px; height: 1444px; border-radius: 10px; background: #fff; display: flex; flex-direction: column; }
.tabstrip { height: 74px; flex: none; display: flex; background: linear-gradient(#c7c7c7, #cbcbcb); border-bottom: 1px solid #8e8e8e; position: relative; }
.lights { display: flex; gap: 16px; padding: 26px 0 0 24px; width: 144px; flex: none; }
.lights i { width: 24px; height: 24px; border-radius: 50%; border: 1px solid #e14640; background: #fc605b; }
.lights .yellow { background: #fdbc40; border-color: #dfa023; }
.lights .green { background: #34c84a; border-color: #1eac2c; }
.tabs { display: flex; padding-top: 17px; flex: none; }
.tab { position: relative; width: 161.55px; height: 57px; padding: 13px 0 0 31px; display: flex; align-items: flex-start; flex: none; }
.tab.active { z-index: 2; }
.shape { position: absolute; left: 0; top: 0; width: 188px; height: 57px; }
.fav { position: relative; width: 32px; height: 32px; flex: none; }
.title { position: relative; width: 59px; margin-left: 12px; height: 32px; line-height: 33px; font-size: 26px; letter-spacing: -.6px; color: #000; white-space: nowrap; flex: none; -webkit-mask-image: linear-gradient(90deg, #000 62%, transparent 100%); mask-image: linear-gradient(90deg, #000 62%, transparent 100%); }
.title.tight { letter-spacing: -1.2px; }
.title.plain { -webkit-mask-image: none; mask-image: none; }
.x { position: relative; width: 16px; height: 16px; margin: 8px 0 0 4px; flex: none; }
.letter { color: #fff; font-size: 26px; line-height: 32px; font-weight: 800; text-align: center; }
.navy { background: #232733; }
.black { background: #000; border-radius: 4px; }
.ryan { background: #fff; color: #777; font: 300 12px/16px "Open Sans", sans-serif; letter-spacing: -.4px; white-space: nowrap; }
.newtab { margin: 32px 0 0 21px; flex: none; }
.profile { font-size: 24px; line-height: 30px; margin: 25px 0 0 19px; letter-spacing: -.3px; }

.toolbar { height: 75px; flex: none; background: #f2f2f2; border-bottom: 2px solid #b7b7b7; display: flex; align-items: center; padding-left: 20px; }
.nav { width: 32px; height: 32px; margin-right: 24px; flex: none; }
.omnibox { width: 1291px; height: 54px; margin-left: -3px; flex: none; background: #fff; border: 1.5px solid #b3b3b3; border-radius: 6px; display: flex; align-items: center; font-size: 27.5px; white-space: nowrap; }
.lock { margin: 0 0 0 17px; }
.secure { color: #20813a; margin-left: 16px; width: 83px; padding-top: 1px; }
.sep { width: 1.5px; height: 32px; background: #b8b8b8; margin-left: 9px; }
.url { margin-left: 13px; color: #000; letter-spacing: -.04px; padding-top: 1px; }
.scheme { color: #20813a; }
.dim { color: #808080; }
.star { margin: 0 12px 0 auto; }
.extensions { display: flex; align-items: center; margin-left: 10px; }
.ext { position: relative; width: 56px; height: 32px; padding-left: 12px; flex: none; }
.ext svg { display: block; width: 32px; height: 32px; }
.badge { position: absolute; left: 28px; top: 16px; width: 24px; height: 24px; border-radius: 4px; background: #559bf3; color: #fff; font: 700 19px/26px Roboto, sans-serif; text-align: center; }
.badge.wide { left: 20px; width: 32px; }
.dots { margin-left: 16px; }

.page { flex: 1; position: relative; background: #fff; overflow: hidden; }
.page-head { height: 41px; border-bottom: 2px solid #f2f2f2; display: flex; padding-left: 1226px; gap: 64px; }
.page-head i { width: 19px; height: 2px; background: #2c2c2c; border-radius: 0 0 8px 8px; }
.services { padding: 154px 0 0 455px; }
.services h2 { margin: 0; height: 136.1px; font: 700 75px/136px "Open Sans Condensed", "Open Sans", sans-serif; letter-spacing: 1.28px; color: #000; white-space: nowrap; }
.page-shade { position: absolute; left: 0; right: 0; bottom: 0; height: 84px; background: linear-gradient(rgba(0,0,0,0), rgba(0,0,0,.075)); -webkit-mask-image: linear-gradient(90deg, #000 96.5%, transparent 99.5%); mask-image: linear-gradient(90deg, #000 96.5%, transparent 99.5%); }

/* dock */
.dock { position: absolute; left: 72px; top: 1492px; width: 2416px; height: 108px; padding-left: 6.5px; background: #504d50; border-radius: 10px 10px 0 0; box-shadow: 0 -2px 5px rgba(0,0,0,.25); display: flex; }
.app { position: relative; width: 90.85px; height: 108px; flex: none; }
.app > svg { display: block; width: 90px; height: 108px; }
.running::after { content: ""; position: absolute; left: 40.5px; top: 96px; width: 8px; height: 8px; border-radius: 50%; background: #000; }
.divider { width: 2px; height: 80px; margin: 14px 16px 0 22px; background: #1b1a1b; flex: none; }
.prompt { font: 700 20px "DejaVu Sans Mono", monospace; fill: #fff; }
.cal-month { font: 400 16px "Open Sans", sans-serif; fill: #fff; text-anchor: middle; }
.cal-day { font: 300 41px Inter, sans-serif; fill: #222; text-anchor: middle; }
.map-3d { font: 400 11.5px Inter, sans-serif; fill: #333; text-anchor: middle; }
.petals rect { mix-blend-mode: multiply; }
.adobe { width: 80.5px; height: 79px; margin: 9px 0 0 5px; padding-bottom: 4px; border: 3.5px solid; box-shadow: inset 0 0 0 1.5px rgba(0,0,0,.45); display: flex; justify-content: center; align-items: center; font: 600 52px/1 "Open Sans", sans-serif; font-stretch: 87%; }
.dw { color: #79f82f; background: #0c2105; border-color: #66f32b; letter-spacing: -1px; }
.ps { color: #22cdfb; background: #04262f; border-color: #22cdfb; }
.lr { color: #b4d9f0; background: #0f2f40; border-color: #b4d9f0; }
.ai { color: #fd8f20; background: #2f1802; border-color: #fd8f20; }
.pr { color: #e68afc; background: #35083f; border-color: #e68afc; }
```
